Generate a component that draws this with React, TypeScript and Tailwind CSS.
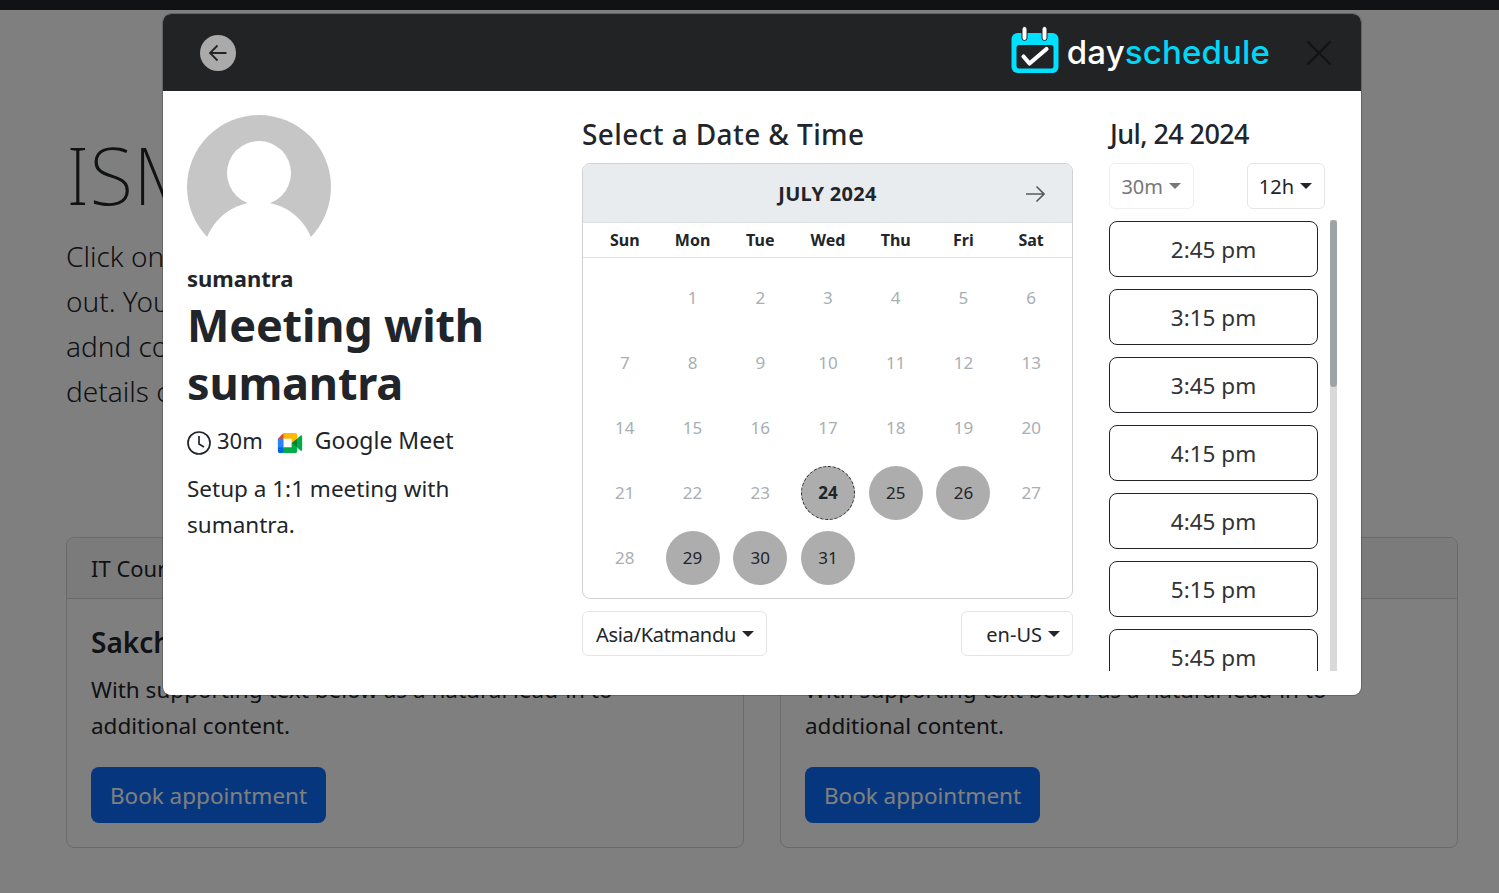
const WEEKDAYS = ["Sun", "Mon", "Tue", "Wed", "Thu", "Fri", "Sat"];
const SLOTS = ["2:45 pm", "3:15 pm", "3:45 pm", "4:15 pm", "4:45 pm", "5:15 pm", "5:45 pm", "6:15 pm"];
const AVAILABLE = [24, 25, 26, 29, 30, 31];

function Caret({ muted }: { muted?: boolean }) {
  return (
    <span
      className={`inline-block ml-[6px] border-x-[6px] border-t-[6px] border-x-transparent ${
        muted ? "border-t-[#777777]" : "border-t-[#212529]"
      }`}
    />
  );
}

function Dropdown({ label, className, muted }: { label: string; className: string; muted?: boolean }) {
  return (
    <button
      className={`flex items-center justify-end rounded-md border pr-[12px] text-[20px] ${
        muted ? "border-[#eef0f2] text-[#777777]" : "border-[#e3e5e8] text-[#212529]"
      } ${className}`}
    >
      <span className="pt-[2px]">{label}</span>
      <Caret muted={muted} />
    </button>
  );
}

function Logo() {
  return (
    <div className="flex items-center">
      <svg width="48" height="48" viewBox="0 0 48 48" fill="none" className="mb-[6px]">
        <rect x="0.5" y="7" width="47" height="40" rx="6" fill="#00e0ff" />
        <rect x="5.5" y="19" width="37" height="23.5" rx="2.5" fill="#222325" />
        <path d="M12.5 30.5l6 7L35.5 23" stroke="#ffffff" strokeWidth="4.2" strokeLinecap="round" strokeLinejoin="round" />
        <rect x="11" y="0.5" width="5" height="14" rx="2.5" fill="#ffffff" stroke="#222325" />
        <rect x="31" y="0.5" width="5" height="14" rx="2.5" fill="#ffffff" stroke="#222325" />
      </svg>
      <span className="ml-[8px] font-['Inter',sans-serif] text-[33px] font-medium leading-none tracking-[0.15px] text-white">
        day<span className="text-[#00d7f5]">schedule</span>
      </span>
    </div>
  );
}

function Avatar() {
  return (
    <svg width="144" height="144" viewBox="0 0 144 144" className="block">
      <circle cx="72" cy="72" r="72" fill="#c6c6c6" />
      <circle cx="72" cy="58" r="32" fill="#ffffff" />
      <circle cx="72" cy="143" r="56" fill="#ffffff" />
      <rect x="0" y="123" width="144" height="21" fill="#ffffff" />
    </svg>
  );
}

function MeetIcon() {
  return (
    <svg width="26" height="20" viewBox="0 0 87.5 72">
      <path fill="#00832d" d="M49.5 36l8.53 9.75 11.47 7.33 2-17.02-2-16.64-11.69 6.44z" />
      <path fill="#0066da" d="M0 51.5V66c0 3.315 2.685 6 6 6h14.5l3-10.96-3-9.54-9.95-3z" />
      <path fill="#e94235" d="M20.5 0L0 20.5l10.55 3 9.95-3 2.95-9.41z" />
      <path fill="#2684fc" d="M20.5 20.5H0v31h20.5z" />
      <path
        fill="#00ac47"
        d="M82.6 8.68L69.5 19.42v33.66l13.16 10.79c1.97 1.54 4.85.135 4.85-2.37V11c0-2.535-2.945-3.925-4.91-2.32zM49.5 36v15.5h-29V72h43c3.315 0 6-2.685 6-6V53.08z"
      />
      <path fill="#ffba00" d="M63.5 0h-43v20.5h29V36l20-16.57V6c0-3.315-2.685-6-6-6z" />
    </svg>
  );
}

function Calendar() {
  const days: (number | null)[] = [null];
  for (let d = 1; d <= 31; d++) days.push(d);

  return (
    <div className="h-[436px] overflow-hidden rounded-lg border border-[#d0d3d6]">
      <div className="relative flex h-[58px] items-center justify-center bg-[#e9ecef] pt-[1px] text-[20px] font-bold tracking-[0.3px] text-[#212529]">
        JULY 2024
        <svg width="20" height="20" viewBox="0 0 20 20" fill="none" className="absolute right-[27px] top-[20px]">
          <path d="M1 10h18M11.5 2.5L19 10l-7.5 7.5" stroke="#555b61" strokeWidth="1.6" />
        </svg>
      </div>
      <div className="grid h-[36px] grid-cols-7 items-center border-y border-[#dee2e6] pl-2 pr-[7px] text-center text-[16px] font-bold text-[#212529]">
        {WEEKDAYS.map((w) => (
          <div key={w}>{w}</div>
        ))}
      </div>
      <div className="grid grid-cols-7 pl-2 pr-[7px] pt-[7px]">
        {days.map((d, i) => (
          <div key={i} className="flex h-[65px] items-center justify-center">
            {d !== null && (
              <span
                className={`flex h-[54px] w-[54px] items-center justify-center rounded-full text-[17px] ${
                  AVAILABLE.includes(d) ? "bg-[#adadad] text-[#212529]" : "text-[#a9aeb3]"
                } ${d === 24 ? "border border-dashed border-[#212529] font-bold" : ""}`}
              >
                {d}
              </span>
            )}
          </div>
        ))}
      </div>
    </div>
  );
}

function BookingModal() {
  return (
    <div className="absolute left-[163px] top-[14px] h-[681px] w-[1198px] overflow-hidden rounded-lg bg-white shadow-[0_0_0_1px_rgba(0,0,0,0.2)]">
      <div className="flex h-[77px] items-center justify-between bg-[#222325] pl-[37px] pr-[29px]">
        <button className="flex h-[36px] w-[36px] items-center justify-center rounded-full bg-[#aaaaaa]">
          <svg width="20" height="20" viewBox="0 0 20 20" fill="none">
            <path d="M18.5 10H2M9.5 2.5L2 10l7.5 7.5" stroke="#222325" strokeWidth="1.8" />
          </svg>
        </button>
        <div className="flex items-center">
          <Logo />
          <svg width="26" height="26" viewBox="0 0 26 26" fill="none" className="ml-[36px]">
            <path d="M1.5 1.5l23 23M24.5 1.5l-23 23" stroke="#111214" strokeWidth="2" />
          </svg>
        </div>
      </div>

      <div className="flex pl-6 pt-6">
        <div className="w-[395px] shrink-0 text-[#212529]">
          <Avatar />
          <div className="mt-[3px] text-[22px] font-bold leading-[32px]">sumantra</div>
          <h1 className="mt-[2px] w-[340px] text-[45px] font-bold leading-[58px] tracking-[-0.2px]">
            Meeting with sumantra
          </h1>
          <div className="mt-[10px] flex h-[36px] items-center">
            <svg width="24" height="24" viewBox="0 0 24 24" fill="none" className="mt-[5px]">
              <circle cx="12" cy="12" r="11" stroke="#212529" strokeWidth="1.7" />
              <path d="M12 5v8l5 3" stroke="#212529" strokeWidth="1.7" />
            </svg>
            <span className="ml-[6px] text-[22px]">30m</span>
            <span className="ml-[14px] mt-[5px] flex">
              <MeetIcon />
            </span>
            <span className="ml-[12px] text-[23px]">Google Meet</span>
          </div>
          <p className="mt-[13px] w-[300px] text-[22.5px] leading-[36px]">Setup a 1:1 meeting with sumantra.</p>
        </div>

        <div className="w-[491px] shrink-0">
          <h2 className="flex h-[48px] items-start text-[28px] font-medium leading-[38px] tracking-[0.4px] text-[#212529]">
            Select a Date &amp; Time
          </h2>
          <Calendar />
          <div className="mt-[12px] flex justify-between">
            <Dropdown label="Asia/Katmandu" className="h-[45px] w-[185px] tracking-[-0.3px]" />
            <Dropdown label="en-US" className="h-[45px] w-[112px]" />
          </div>
        </div>

        <div className="ml-[36px] w-[228px] shrink-0">
          <h2 className="flex h-[48px] items-start pl-[1px] text-[27px] font-medium leading-[38px] tracking-[-0.6px] text-[#212529]">
            Jul, 24 2024
          </h2>
          <div className="flex w-[216px] justify-between">
            <Dropdown label="30m" muted className="h-[46px] w-[85px]" />
            <Dropdown label="12h" className="h-[46px] w-[78px]" />
          </div>
          <div className="mt-[11px] flex h-[451px]">
            <div className="mt-[1px] flex h-[450px] w-[209px] flex-col gap-[12px] overflow-hidden">
              {SLOTS.map((s) => (
                <button
                  key={s}
                  className="h-[56px] shrink-0 rounded-lg border border-[#212529] pt-[2px] text-[22.5px] text-[#333333]"
                >
                  {s}
                </button>
              ))}
            </div>
            <div className="ml-[12px] h-[451px] w-[7px] bg-[#d9d9d9]">
              <div className="h-[167px] rounded-[4px] bg-[#a0a3a6]" />
            </div>
          </div>
        </div>
      </div>
    </div>
  );
}

function CourseCard({ course, teacher }: { course: string; teacher: string }) {
  return (
    <div className="h-[311px] overflow-hidden rounded-lg border border-[#d5d5d5] text-[#212529]">
      <div className="flex h-[61px] items-center border-b border-[#d5d5d5] bg-[#f7f7f7] px-6 text-[22px]">{course}</div>
      <div className="p-6">
        <h3 className="text-[28px] font-semibold leading-[38px]">{teacher}</h3>
        <p className="mt-[11px] w-[560px] text-[22.5px] leading-[36px]">
          With supporting text below as a natural lead-in to additional content.
        </p>
        <button className="mt-[23px] h-[56px] w-[235px] rounded-lg bg-[#0d6efd] pt-[1px] text-[22.5px] text-white">
          Book appointment
        </button>
      </div>
    </div>
  );
}

export default function App() {
  return (
    <div className="relative h-[893px] w-[1499px] overflow-hidden bg-white font-['Noto_Sans',sans-serif]">
      <div className="h-[10px] bg-[#212529]" />
      <div className="pl-[66px] pr-[41px] pt-[116px] text-[#212529]">
        <h1 className="text-[80px] font-extralight leading-[96px]">ISMT</h1>
        <p className="mt-[12px] text-[28px] font-light leading-[45px]">
          Click on
          <br />
          out. You
          <br />
          adnd con
          <br />
          details of
        </p>
        <div className="mt-[123px] grid grid-cols-2 gap-[36px]">
          <CourseCard course="IT Course" teacher="Sakchi Shrestha" />
          <CourseCard course="IT Course" teacher="Sakchi Shrestha" />
        </div>
      </div>
      <div className="absolute inset-0 bg-black/50" />
      <BookingModal />
    </div>
  );
}
